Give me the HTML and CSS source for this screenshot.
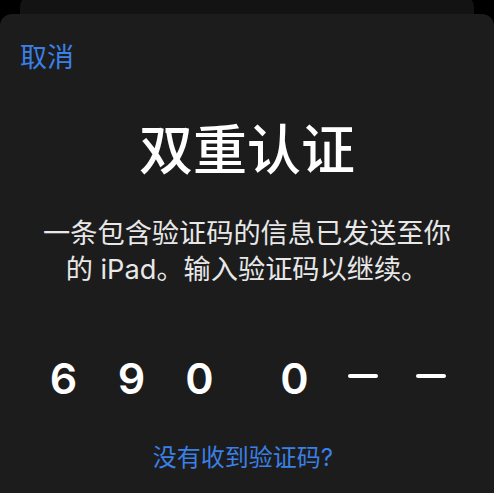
FILE: index.html
```html
<!DOCTYPE html>
<html lang="zh-CN">
<head>
<meta charset="utf-8">
<title>双重认证</title>
<link rel="stylesheet" href="styles.css">
</head>
<body>
<div class="sheet-back"></div>
<main class="sheet">
  <div class="header"><span class="cancel">取消</span></div>
  <h1 class="title">双重认证</h1>
  <p class="desc">一条包含验证码的信息已发送至你<br>的 iPad。输入验证码以继续。</p>
  <div class="code">
    <div class="group">
      <span class="slot">6</span>
      <span class="slot">9</span>
      <span class="slot">0</span>
    </div>
    <div class="group">
      <span class="slot">0</span>
      <span class="slot"><span class="dash"></span></span>
      <span class="slot"><span class="dash"></span></span>
    </div>
  </div>
  <div class="link">没有收到验证码?</div>
</main>
</body>
</html>
```
FILE: styles.css
```css
* { box-sizing: border-box; }
html, body {
  margin: 0;
  padding: 0;
  background: #000;
  height: 100%;
  overflow: hidden;
}
body {
  font-family: "Inter", "Noto Sans CJK SC", sans-serif;
  color: #fff;
}
.sheet-back {
  height: 19px;
  margin: -5px 20px 0 20px;
  background: #131313;
  border-radius: 12px 12px 0 0;
}
.sheet {
  background: #1c1c1c;
  border-radius: 12px 12px 0 0;
  height: calc(100vh - 14px);
  padding-top: 29px;
}
.header {
  padding-left: 20px;
  font-size: 27px;
  line-height: 30px;
}
.cancel { color: #3a80e6; }
.title {
  margin: 48px 0 0 0;
  text-align: center;
  font-size: 54px;
  line-height: 60px;
  font-weight: 500;
  color: #fff;
}
.desc {
  margin: 35px 0 0 0;
  text-align: center;
  font-size: 27.2px;
  line-height: 36px;
  color: #e8e8e8;
}
.code {
  margin-top: 65px;
  display: flex;
  justify-content: center;
  gap: 27px;
  font-size: 43px;
  line-height: 50px;
  font-weight: 600;
}
.group { display: flex; }
.slot {
  width: 68px;
  height: 50px;
  display: flex;
  align-items: center;
  justify-content: center;
}
.dash {
  display: block;
  width: 30px;
  height: 4px;
  border-radius: 2px;
  background: #fff;
  margin-top: -5px;
}
.link {
  margin-top: 40px;
  text-align: center;
  font-size: 24px;
  line-height: 30px;
  color: #3a80e6;
  padding-right: 8px;
}
```
